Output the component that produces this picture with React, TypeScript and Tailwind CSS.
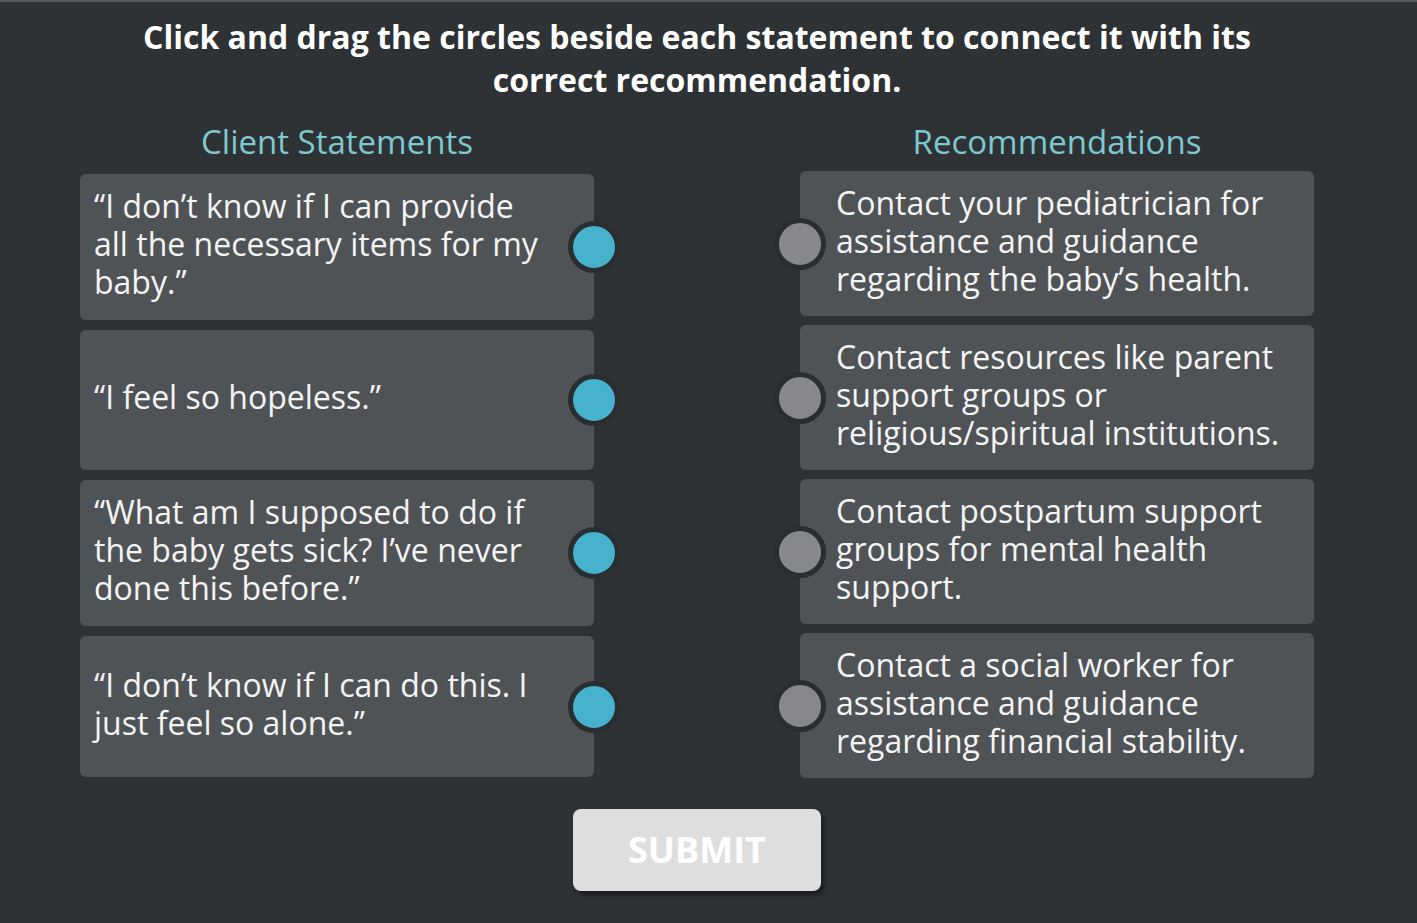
const LEFT = [
  { text: "“I don’t know if I can provide all the necessary items for my baby.”", h: "h-[146px]" },
  { text: "“I feel so hopeless.”", h: "h-[140px]" },
  { text: "“What am I supposed to do if the baby gets sick? I’ve never done this before.”", h: "h-[146px]" },
  { text: "“I don’t know if I can do this. I just feel so alone.”", h: "h-[141px]" },
];

const RIGHT = [
  "Contact your pediatrician for assistance and guidance regarding the baby’s health.",
  "Contact resources like parent support groups or religious/spiritual institutions.",
  "Contact postpartum support groups for mental health support.",
  "Contact a social worker for assistance and guidance regarding financial stability.",
];

export default function App() {
  return (
    <div className="h-[923px] w-full overflow-hidden border-t-2 border-[#55585b] bg-[#2f3235] font-['Open_Sans',sans-serif] text-[#f4f4f4]">
      <div className="ml-[80px] w-[1234px]">
        <h1 className="pt-[13px] text-center text-[32px] font-bold leading-[43px] text-white">
          Click and drag the circles beside each statement to connect it with its
          <br />
          correct recommendation.
        </h1>

        <div className="mt-[21px] grid grid-cols-2 gap-[206px]">
          <div>
            <h2 className="text-center text-[33px] leading-[40px] text-[#7ec8d0]">Client Statements</h2>
            <div className="mt-[12px] flex flex-col gap-[10px]">
              {LEFT.map((c) => (
                <div
                  key={c.text}
                  className={`relative flex items-center rounded-md bg-[#505356] pl-[14px] pr-[40px] ${c.h}`}
                >
                  <p className="-mt-[6px] text-[32px] leading-[38px]">{c.text}</p>
                  <span className="absolute right-0 top-1/2 h-[52px] w-[52px] -translate-y-1/2 translate-x-1/2 rounded-full border-[5px] border-[#2b2e31] bg-[#47b2cd]" />
                </div>
              ))}
            </div>
          </div>

          <div>
            <h2 className="text-center text-[33px] leading-[40px] text-[#7ec8d0]">Recommendations</h2>
            <div className="mt-[9px] flex flex-col gap-[9px]">
              {RIGHT.map((t) => (
                <div
                  key={t}
                  className="relative flex h-[145px] items-center rounded-md bg-[#505356] pl-[36px] pr-[16px]"
                >
                  <p className="-mt-[6px] text-[32px] leading-[38px]">{t}</p>
                  <span className="absolute left-0 top-1/2 h-[52px] w-[52px] -translate-x-1/2 -translate-y-1/2 rounded-full border-[5px] border-[#2b2e31] bg-[#86888c]" />
                </div>
              ))}
            </div>
          </div>
        </div>

        <div className="mt-[31px] flex justify-center">
          <button className="h-[82px] w-[248px] rounded-lg bg-[#dedede] text-[36px] font-bold text-white shadow-[3px_4px_4px_rgba(0,0,0,0.45)]">
            SUBMIT
          </button>
        </div>
      </div>
    </div>
  );
}
